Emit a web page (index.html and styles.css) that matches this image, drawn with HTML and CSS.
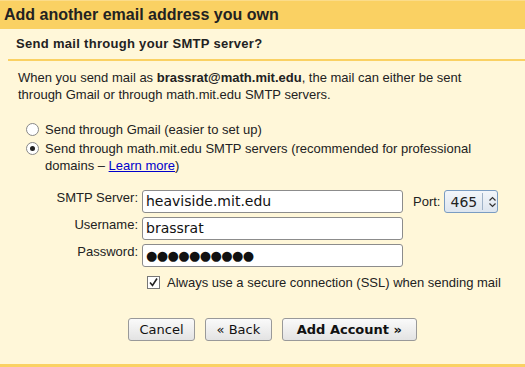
FILE: index.html
```html
<!DOCTYPE html>
<html>
<head>
<meta charset="utf-8">
<link rel="stylesheet" href="styles.css">
</head>
<body>
<div class="dialog">
  <div class="title">Add another email address you own</div>
  <div class="body">
    <div class="subtitle">Send mail through your SMTP server?</div>
    <div class="content">
      <p class="intro">When you send mail as <b>brassrat@math.mit.edu</b>, the mail can either be sent through Gmail or through math.mit.edu SMTP servers.</p>
      <div class="options">
        <label class="opt"><span class="radio"></span><span>Send through Gmail (easier to set up)</span></label>
        <label class="opt"><span class="radio checked"></span><span>Send through math.mit.edu SMTP servers (recommended for professional domains – <a href="#">Learn more</a>)</span></label>
      </div>
      <div class="form">
        <div class="row">
          <span class="lbl">SMTP Server:</span>
          <span class="field">heaviside.mit.edu</span>
          <span class="port-lbl">Port:</span>
          <span class="select">465<span class="sep"></span><svg width="9" height="12" viewBox="0 0 9 12"><path d="M1.5 4.5 L4.5 1.5 L7.5 4.5 M1.5 7.5 L4.5 10.5 L7.5 7.5" fill="none" stroke="#333" stroke-width="1.2"/></svg></span>
        </div>
        <div class="row">
          <span class="lbl">Username:</span>
          <span class="field">brassrat</span>
        </div>
        <div class="row">
          <span class="lbl">Password:</span>
          <span class="field pw">●●●●●●●●●●</span>
        </div>
        <div class="check-row">
          <span class="checkbox"><svg width="11" height="11" viewBox="0 0 11 11"><path d="M2 5.5 L4.5 8.5 L9 1.5" fill="none" stroke="#222" stroke-width="1.6"/></svg></span>
          <span>Always use a secure connection (SSL) when sending mail</span>
        </div>
      </div>
      <div class="buttons">
        <span class="btn">Cancel</span>
        <span class="btn">« Back</span>
        <span class="btn primary">Add Account »</span>
      </div>
    </div>
  </div>
</div>
</body>
</html>
```
FILE: styles.css
```css
html, body {
  margin: 0;
  padding: 0;
  background: #fff7d9;
}
body {
  font-family: "Liberation Sans", Arial, sans-serif;
  font-size: 13px;
  color: #222;
}
.dialog {
  width: 525px;
  height: 367px;
  display: flex;
  flex-direction: column;
  background: #fff7d9;
  border-bottom: 3px solid #fad163;
  box-sizing: border-box;
}
.title {
  height: 29px;
  box-sizing: border-box;
  background: #fad163;
  border-top: 1px solid #fbdc8a;
  font-weight: bold;
  font-size: 16px;
  line-height: 27px;
  padding-left: 4px;
  color: #222;
}
.body {
  padding-left: 8px;
  flex: 1;
}
.subtitle {
  font-weight: bold;
  font-size: 13px;
  letter-spacing: 0.3px;
  height: 32px;
  box-sizing: border-box;
  line-height: 30px;
  padding-left: 8px;
  border-bottom: 2px solid #fad163;
}
.content {
  padding-left: 10px;
}
.intro {
  margin: 8px 0 0;
  line-height: 17px;
  width: 480px;
}
.options {
  margin-top: 18px;
  padding-left: 8px;
}
.opt {
  display: flex;
  align-items: flex-start;
  line-height: 17px;
  margin-bottom: 2px;
  width: 462px;
}
.radio {
  flex: none;
  width: 11px;
  height: 11px;
  border: 1px solid #888;
  border-radius: 50%;
  background: #fff;
  margin: 2px 6px 0 0;
  box-sizing: content-box;
  position: relative;
}
.radio.checked::after {
  content: "";
  position: absolute;
  left: 3px;
  top: 3px;
  width: 5px;
  height: 5px;
  border-radius: 50%;
  background: #222;
}
a { color: #0000cc; }
.form {
  margin-top: 16px;
}
.row {
  display: flex;
  align-items: center;
  height: 23px;
  margin-bottom: 4px;
}
.lbl {
  width: 120px;
  text-align: right;
  padding-right: 4px;
  align-self: flex-start;
  line-height: 15px;
}
.field {
  width: 261px;
  height: 23px;
  box-sizing: border-box;
  border: 1px solid #8c8c8c;
  border-radius: 3px;
  background: #fff;
  font-family: "DejaVu Sans", sans-serif;
  font-size: 14px;
  line-height: 21px;
  padding-left: 3px;
  color: #111;
}
.field.pw {
  font-size: 13px;
  letter-spacing: -0.6px;
}
.port-lbl {
  margin-left: 10px;
  margin-right: 4px;
}
.select {
  display: flex;
  align-items: center;
  width: 54px;
  height: 23px;
  box-sizing: border-box;
  border: 1px solid #7a9cc2;
  border-radius: 3px;
  background: linear-gradient(#f3f6fa, #dde5ef);
  font-family: "DejaVu Sans", sans-serif;
  font-size: 14px;
  padding-left: 5px;
  color: #222;
}
.sep {
  width: 1px;
  height: 17px;
  background: #9fb2c8;
  margin: 0 5px;
}
.check-row {
  display: flex;
  align-items: center;
  margin-left: 129px;
  margin-top: 7px;
  height: 16px;
}
.checkbox {
  width: 11px;
  height: 11px;
  border: 1px solid #777;
  background: #fff;
  margin-right: 7px;
  display: flex;
}
.buttons {
  display: flex;
  gap: 10px;
  margin-left: 110px;
  margin-top: 28px;
}
.btn {
  height: 23px;
  box-sizing: border-box;
  border: 1px solid #999;
  border-radius: 3px;
  background: linear-gradient(#fafafa, #e3e3e3);
  font-family: "DejaVu Sans", sans-serif;
  font-size: 13px;
  line-height: 21px;
  padding: 0 10.5px;
  color: #111;
}
.btn.primary {
  font-weight: bold;
  padding: 0 14px;
}
```
